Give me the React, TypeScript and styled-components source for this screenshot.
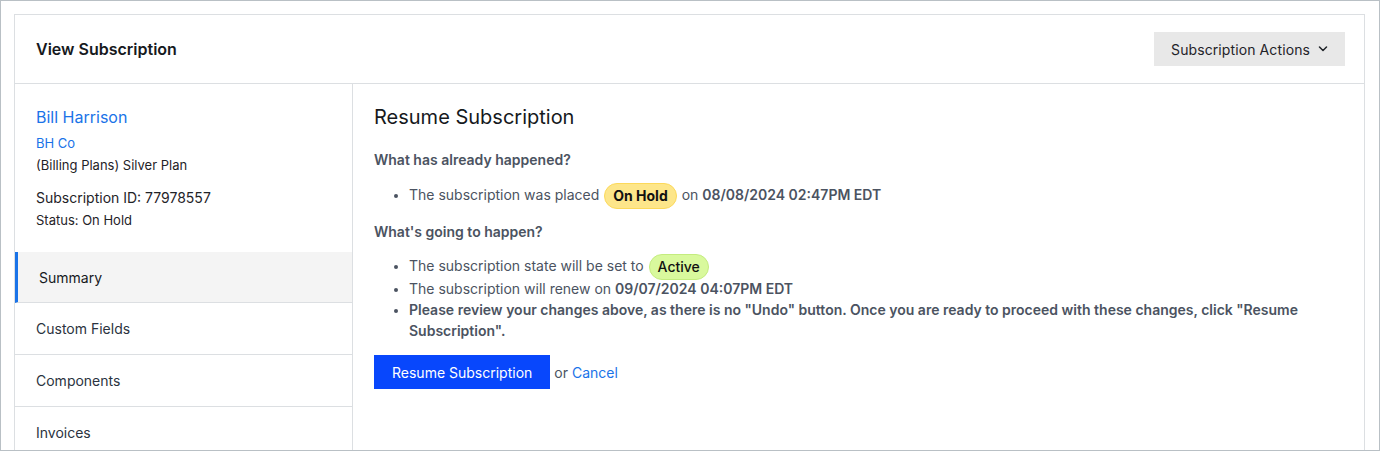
import React from 'react';
import styled, { createGlobalStyle } from 'styled-components';

const GlobalStyle = createGlobalStyle`
  html, body {
    margin: 0;
    padding: 0;
    background: #ffffff;
  }
  body {
    font-family: Inter, "Noto Sans", "Liberation Sans", sans-serif;
    color: #1f2328;
  }
  * {
    box-sizing: border-box;
  }
`;

const Frame = styled.div`
  width: 1380px;
  height: 451px;
  border: 1px solid #b9c0c5;
  padding: 13px 14px 0 13px;
  overflow: hidden;
`;

const Card = styled.div`
  border: 1px solid #dcdfe2;
  background: #ffffff;
  height: 460px;
  display: flex;
  flex-direction: column;
`;

const Header = styled.header`
  height: 69px;
  flex: none;
  display: flex;
  align-items: center;
  justify-content: space-between;
  padding: 0 19px 0 21px;
  border-bottom: 1px solid #dcdfe2;
`;

const Title = styled.h1`
  margin: 0;
  font-size: 16px;
  font-weight: 600;
  color: #16191d;
`;

const ActionsButton = styled.button`
  display: flex;
  align-items: center;
  gap: 8px;
  height: 34px;
  padding: 0 17px 0 17px;
  border: none;
  background: #e8e8e8;
  font-family: inherit;
  font-size: 14px;
  letter-spacing: 0.1px;
  color: #1f2328;
  cursor: pointer;
`;

const Body = styled.div`
  flex: 1;
  display: flex;
`;

const Sidebar = styled.aside`
  width: 338px;
  flex: none;
  border-right: 1px solid #dcdfe2;
  display: flex;
  flex-direction: column;
`;

const Customer = styled.div`
  padding: 22px 21px 23px;
  display: flex;
  flex-direction: column;
`;

const CustomerName = styled.a`
  font-size: 16px;
  line-height: 22px;
  color: #1a73e8;
  text-decoration: none;
`;

const Company = styled.a`
  margin-top: 6px;
  font-size: 13px;
  line-height: 18px;
  color: #1a73e8;
  text-decoration: none;
`;

const Meta = styled.div<{ $size?: number; $gap?: number }>`
  margin-top: ${(p) => p.$gap ?? 4}px;
  font-size: ${(p) => p.$size ?? 13}px;
  line-height: 18px;
  color: #1f2328;
`;

const Nav = styled.nav`
  display: flex;
  flex-direction: column;
`;

const NavItem = styled.a<{ $active?: boolean }>`
  height: ${(p) => (p.$active ? 51 : 52)}px;
  flex: none;
  display: flex;
  align-items: center;
  padding-left: 21px;
  border-left: ${(p) => (p.$active ? '3px solid #1a73e8' : '0')};
  border-bottom: 1px solid #dcdfe2;
  background: ${(p) => (p.$active ? '#f4f4f4' : '#ffffff')};
  font-size: 14px;
  color: ${(p) => (p.$active ? '#16191d' : '#2b3340')};
  text-decoration: none;
`;

const Main = styled.main`
  flex: 1;
  padding: 20px 21px;
`;

const PageTitle = styled.h2`
  margin: 0 0 21px;
  font-size: 20px;
  font-weight: 400;
  line-height: 26px;
  color: #16191d;
`;

const SectionTitle = styled.h3`
  margin: 0;
  font-size: 14px;
  font-weight: 600;
  line-height: 18px;
  color: #4b5361;
`;

const List = styled.ul`
  margin: 13px 0 15px;
  padding-left: 35px;
  font-size: 14px;
  line-height: 21px;
  color: #4b5361;

  li::marker {
    font-size: 12px;
  }
`;

const Item = styled.li<{ $strong?: boolean; $tall?: number }>`
  font-weight: ${(p) => (p.$strong ? 600 : 400)};
  line-height: ${(p) => p.$tall ?? 21}px;
`;

const Strong = styled.strong`
  font-weight: 600;
`;

const Badge = styled.span<{ $tone: 'hold' | 'active' }>`
  display: inline-block;
  height: 26px;
  line-height: 24px;
  padding: 0 8px;
  margin: -3px 1px;
  border-radius: 13px;
  vertical-align: middle;
  font-size: 14px;
  color: #111111;
  font-weight: ${(p) => (p.$tone === 'hold' ? 700 : 500)};
  background: ${(p) => (p.$tone === 'hold' ? '#fde68a' : '#d9f99d')};
  border: 1px solid ${(p) => (p.$tone === 'hold' ? '#fcd95a' : '#c4ec7f')};
`;

const Actions = styled.div`
  margin-top: -1px;
  display: flex;
  align-items: center;
  gap: 4px;
  font-size: 14px;
  color: #4b5361;
`;

const PrimaryButton = styled.button`
  height: 34px;
  padding: 0 18px;
  border: none;
  background: #0847fc;
  color: #ffffff;
  font-family: inherit;
  font-size: 14px;
  cursor: pointer;
`;

const Link = styled.a`
  color: #1a73e8;
  text-decoration: none;
`;

function Chevron() {
  return (
    <svg width="10" height="6" viewBox="0 0 10 6" fill="none" stroke="#1f2328" strokeWidth="1.5" strokeLinecap="round" strokeLinejoin="round">
      <path d="M1.5 1 5 4.5 8.5 1" />
    </svg>
  );
}

export default function App() {
  const navItems = ['Summary', 'Custom Fields', 'Components', 'Invoices'];

  return (
    <>
      <GlobalStyle />
      <Frame>
        <Card>
          <Header>
            <Title>View Subscription</Title>
            <ActionsButton>
              Subscription Actions
              <Chevron />
            </ActionsButton>
          </Header>
          <Body>
            <Sidebar>
              <Customer>
                <CustomerName href="#">Bill Harrison</CustomerName>
                <Company href="#">BH Co</Company>
                <Meta>(Billing Plans) Silver Plan</Meta>
                <Meta $size={14} $gap={15}>Subscription ID: 77978557</Meta>
                <Meta $gap={4}>Status: On Hold</Meta>
              </Customer>
              <Nav>
                {navItems.map((item, i) => (
                  <NavItem key={item} href="#" $active={i === 0}>
                    {item}
                  </NavItem>
                ))}
              </Nav>
            </Sidebar>
            <Main>
              <PageTitle>Resume Subscription</PageTitle>
              <SectionTitle>What has already happened?</SectionTitle>
              <List>
                <Item $tall={26}>
                  The subscription was placed <Badge $tone="hold">On Hold</Badge> on{' '}
                  <Strong>08/08/2024 02:47PM EDT</Strong>
                </Item>
              </List>
              <SectionTitle>What's going to happen?</SectionTitle>
              <List>
                <Item $tall={24}>
                  The subscription state will be set to <Badge $tone="active">Active</Badge>
                </Item>
                <Item>
                  The subscription will renew on <Strong>09/07/2024 04:07PM EDT</Strong>
                </Item>
                <Item $strong>
                  Please review your changes above, as there is no "Undo" button. Once you are ready to
                  proceed with these changes, click "Resume Subscription".
                </Item>
              </List>
              <Actions>
                <PrimaryButton>Resume Subscription</PrimaryButton>
                or <Link href="#">Cancel</Link>
              </Actions>
            </Main>
          </Body>
        </Card>
      </Frame>
    </>
  );
}
